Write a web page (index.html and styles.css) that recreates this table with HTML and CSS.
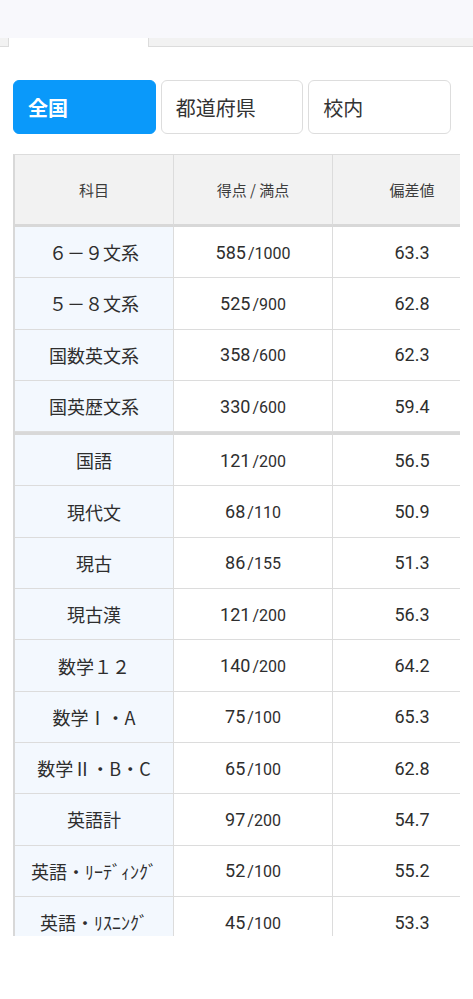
FILE: index.html
```html
<!DOCTYPE html>
<html lang="ja">
<head>
<meta charset="utf-8">
<link rel="stylesheet" href="styles.css">
</head>
<body>
<div class="topbar"></div>
<div class="tabs">
  <div class="tab-stub"></div>
  <div class="tab-active"></div>
  <div class="tab-rest"></div>
</div>
<div class="seg">
  <div class="seg-btn active">全国</div>
  <div class="seg-btn">都道府県</div>
  <div class="seg-btn">校内</div>
</div>
<div class="table-wrap">
  <table class="score">
    <thead>
      <tr><th class="c1">科目</th><th class="c2">得点 / 満点</th><th class="c3">偏差値</th></tr>
    </thead>
    <tbody>
      <tr><td class="subj">６－９文系</td><td><span class="big">585</span><span class="small">/1000</span></td><td class="dev">63.3</td></tr>
      <tr><td class="subj">５－８文系</td><td><span class="big">525</span><span class="small">/900</span></td><td class="dev">62.8</td></tr>
      <tr><td class="subj">国数英文系</td><td><span class="big">358</span><span class="small">/600</span></td><td class="dev">62.3</td></tr>
      <tr><td class="subj">国英歴文系</td><td><span class="big">330</span><span class="small">/600</span></td><td class="dev">59.4</td></tr>
      <tr class="group-start"><td class="subj">国語</td><td><span class="big">121</span><span class="small">/200</span></td><td class="dev">56.5</td></tr>
      <tr><td class="subj">現代文</td><td><span class="big">68</span><span class="small">/110</span></td><td class="dev">50.9</td></tr>
      <tr><td class="subj">現古</td><td><span class="big">86</span><span class="small">/155</span></td><td class="dev">51.3</td></tr>
      <tr><td class="subj">現古漢</td><td><span class="big">121</span><span class="small">/200</span></td><td class="dev">56.3</td></tr>
      <tr><td class="subj">数学１２</td><td><span class="big">140</span><span class="small">/200</span></td><td class="dev">64.2</td></tr>
      <tr><td class="subj">数学Ⅰ・A</td><td><span class="big">75</span><span class="small">/100</span></td><td class="dev">65.3</td></tr>
      <tr><td class="subj">数学Ⅱ・B・C</td><td><span class="big">65</span><span class="small">/100</span></td><td class="dev">62.8</td></tr>
      <tr><td class="subj">英語計</td><td><span class="big">97</span><span class="small">/200</span></td><td class="dev">54.7</td></tr>
      <tr><td class="subj">英語・ﾘｰﾃﾞｨﾝｸﾞ</td><td><span class="big">52</span><span class="small">/100</span></td><td class="dev">55.2</td></tr>
      <tr><td class="subj">英語・ﾘｽﾆﾝｸﾞ</td><td><span class="big">45</span><span class="small">/100</span></td><td class="dev">53.3</td></tr>
    </tbody>
  </table>
</div>
</body>
</html>
```

FILE: styles.css
```css
html, body {
  margin: 0;
  padding: 0;
  background: #ffffff;
  font-family: Roboto, "Noto Sans CJK JP", sans-serif;
  color: #333333;
}

.topbar {
  height: 38px;
  background: #f8f8fc;
}

.tabs {
  display: flex;
  height: 9px;
}

.tab-stub {
  width: 8px;
  background: #f2f2f2;
  border-right: 1px solid #dcdcdc;
  border-bottom: 1px solid #dcdcdc;
}

.tab-active {
  width: 139px;
  background: #ffffff;
}

.tab-rest {
  flex: 1;
  background: #f2f2f2;
  border-left: 1px solid #dcdcdc;
  border-bottom: 1px solid #dcdcdc;
}

.seg {
  display: flex;
  gap: 5px;
  margin: 33px 22px 0 13px;
}

.seg-btn {
  flex: 1;
  box-sizing: border-box;
  height: 54px;
  border: 1px solid #dddddd;
  border-radius: 6px;
  padding-left: 14px;
  display: flex;
  align-items: center;
  font-family: "Noto Sans CJK JP", sans-serif;
  font-size: 20px;
  color: #333333;
  background: #ffffff;
}

.seg-btn.active {
  background: #0a99fa;
  border-color: #0a99fa;
  color: #ffffff;
  font-weight: 700;
}

.table-wrap {
  margin: 20px 0 0 13px;
  width: 447px;
  height: 782px;
  overflow: hidden;
}

.score {
  border-collapse: separate;
  border-spacing: 0;
  table-layout: fixed;
  width: 477px;
  border-top: 1px solid #dcdcdc;
  border-left: 2px solid #d8d8d8;
}

.score th {
  height: 69px;
  padding: 0;
  background: #f2f2f2;
  font-family: "Noto Sans CJK JP", sans-serif;
  font-weight: 400;
  font-size: 15px;
  color: #3c3c3c;
  border-right: 1px solid #dcdcdc;
  border-bottom: 3px solid #d8d8d8;
}

.score .c1 { width: 158px; }
.score .c2 { width: 158px; }
.score .c3 { width: 158px; }

.score td {
  height: 50.3px;
  padding: 0;
  text-align: center;
  border-right: 1px solid #dcdcdc;
  border-bottom: 1px solid #dcdcdc;
  font-size: 18px;
  color: #2e2e2e;
}

.score td.subj {
  background: #f3f8fe;
  font-family: "Noto Sans CJK JP", sans-serif;
  font-size: 18px;
}

.score tr.group-start td {
  border-top: 3px solid #d8d8d8;
}

.big {
  font-size: 18px;
}

.small {
  font-size: 16px;
  margin-left: 2px;
}

.dev {
  font-size: 18px;
}
```
